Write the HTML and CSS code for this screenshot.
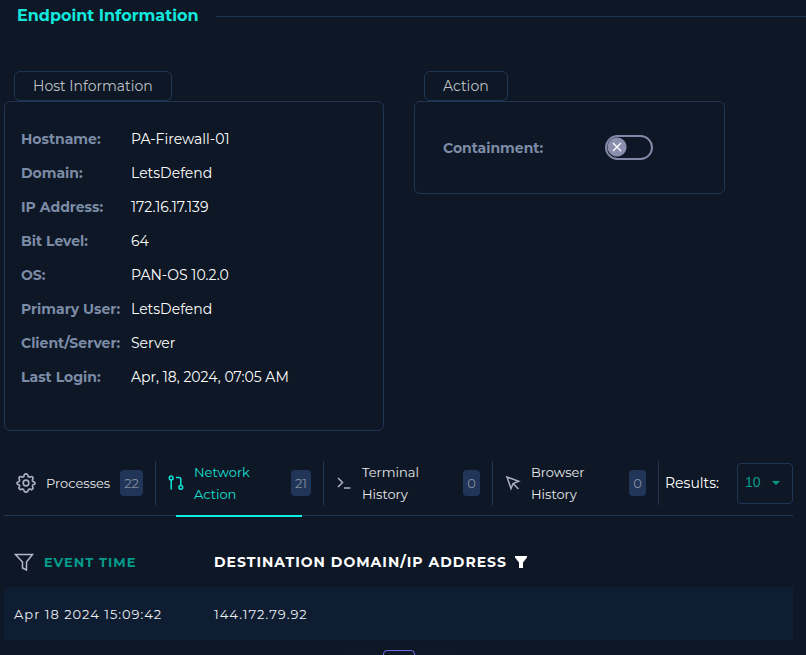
FILE: index.html
```html
<!DOCTYPE html>
<html lang="en">
<head>
<meta charset="utf-8">
<meta name="viewport" content="width=device-width, initial-scale=1">
<title>Endpoint Information</title>
<link rel="stylesheet" href="styles.css">
</head>
<body>
<main class="page">
  <header class="heading"><h1>Endpoint Information</h1></header>

  <div class="panels">
    <section class="group">
      <h2 class="legend">Host Information</h2>
      <dl class="panel host">
        <dt>Hostname:</dt><dd>PA-Firewall-01</dd>
        <dt>Domain:</dt><dd>LetsDefend</dd>
        <dt>IP Address:</dt><dd>172.16.17.139</dd>
        <dt>Bit Level:</dt><dd>64</dd>
        <dt>OS:</dt><dd>PAN-OS 10.2.0</dd>
        <dt>Primary User:</dt><dd>LetsDefend</dd>
        <dt>Client/Server:</dt><dd>Server</dd>
        <dt>Last Login:</dt><dd>Apr, 18, 2024, 07:05 AM</dd>
      </dl>
    </section>
    <section class="group">
      <h2 class="legend">Action</h2>
      <div class="panel action">
        <label for="containment">Containment:</label>
        <span class="switch">
          <input type="checkbox" role="switch" id="containment">
          <svg class="cross" viewBox="0 0 10 10" aria-hidden="true"><path d="M1 1l8 8M9 1l-8 8"/></svg>
        </span>
      </div>
    </section>
  </div>

  <nav class="tabs">
    <button class="tab" type="button">
      <svg class="icon gear" viewBox="0 0 24 24" aria-hidden="true"><circle cx="12" cy="12" r="3.4"/><path d="M10 2Q12 .2 14 2l.6 2.300q1 1 2.300.3l2-.4q1.300.6 1.600 1.900l-.7 2q-.4 1.300.5 2l2 .9q1 1.200 0 2.400l-2 .8q-1 .8-.4 2l.6 2.100q-.4 1.400-1.700 1.700l-2-.6q-1.300-.4-2 .6l-.8 2.200q-2 1.300-4 0l-.8-2.200q-.7-1-2-.6l-2 .6q-1.300-.3-1.700-1.700l.6-2.100q.6-1.200-.4-2l-2-.8q-1-1.200 0-2.400l2-.9q.9-.7.5-2l-.7-2q.3-1.300 1.600-1.900l2 .4q1.300.7 2.300-.3z"/></svg>
      <span class="name">Processes</span><span class="count">22</span>
    </button>
    <button class="tab active" type="button">
      <svg class="icon" viewBox="0 0 16 16" aria-hidden="true"><circle cx="3.200" cy="3" r="1.900"/><path d="M3.200 5v9.600M8 2.600h3q1.800 0 1.800 1.800v6"/><circle cx="12.800" cy="12.300" r="1.900"/></svg>
      <span class="name">Network Action</span><span class="count">21</span>
    </button>
    <button class="tab" type="button">
      <svg class="icon" viewBox="0 0 16 16" aria-hidden="true"><path d="M2 3l4.500 4.500L2 12M8 13h6.500"/></svg>
      <span class="name">Terminal History</span><span class="count">0</span>
    </button>
    <button class="tab" type="button">
      <svg class="icon" viewBox="0 0 16 16" aria-hidden="true"><path d="M2 2l4 11.500 2-5 5.700-2.200zM8 8.500l5.500 5.500"/></svg>
      <span class="name">Browser History</span><span class="count">0</span>
    </button>
    <div class="results">
      <label for="results">Results:</label>
      <span class="picker">
        <select id="results"><option>10</option><option>25</option><option>50</option></select>
        <svg class="arrow" viewBox="0 0 8 4" aria-hidden="true"><path d="M0 0h8L4 4z"/></svg>
      </span>
    </div>
  </nav>

  <table class="events">
    <thead>
      <tr>
        <th scope="col" class="time"><div class="cell"><svg class="outline-filter" viewBox="0 0 20 18" aria-hidden="true"><path d="M1.500 1.500h17L12.500 9v8l-4-2V9z"/></svg>EVENT TIME</div></th>
        <th scope="col"><div class="cell near">DESTINATION DOMAIN/IP ADDRESS<svg class="solid-filter" viewBox="0 0 12 12" aria-hidden="true"><path d="M0 0h12v1.500L8 6.500V12H4V6.500L0 1.500z"/></svg></div></th>
      </tr>
    </thead>
    <tbody><tr><td>Apr 18 2024 15:09:42</td><td>144.172.79.92</td></tr></tbody>
  </table>

  <div class="pager">
    <button type="button" aria-label="Previous page"></button>
    <button type="button" class="current" aria-label="Current page"></button>
    <button type="button" aria-label="Next page"></button>
  </div>
</main>
</body>
</html>
```
FILE: styles.css
```css
* { box-sizing: border-box; }

body {
  margin: 0;
  height: 100vh;
  overflow: hidden;
  background: #0d1725;
  color: #fff;
  font: 14px/22px Montserrat, Inter, sans-serif;
}

button, select { font: inherit; color: inherit; }

.page { padding-left: 4px; padding-right: 13px; }

.heading {
  display: flex;
  align-items: center;
  gap: 18px;
  height: 32px;
  margin-right: -13px;
  padding-left: 13px;
}
.heading::after { content: ""; flex: 1; height: 1px; background: #203556; }
.heading h1 {
  margin: 0;
  color: #12e8de;
  font-size: 16px;
  font-weight: 700;
  line-height: 24px;
}

.panels {
  display: grid;
  grid-template-columns: 380fr 311fr;
  align-items: start;
  gap: 30px;
  margin-top: 39px;
  margin-right: 68px;
}
.legend {
  width: fit-content;
  height: 30px;
  margin: 0 0 0 10px;
  padding: 0 18px;
  border: 1px solid #203556;
  border-radius: 6px;
  color: #bfc1c4;
  font-size: 14px;
  font-weight: 400;
  line-height: 28px;
}
.panel { margin: 0; border: 1px solid #203556; border-radius: 6px; }
.host {
  display: grid;
  grid-template-columns: 110px 1fr;
  grid-auto-rows: 34px;
  align-items: center;
  padding: 20px 16px 36px;
}
.host dt, .action label { color: #7c8ca7; font-weight: 700; }
.host dt { white-space: nowrap; }
.host dd { margin: 0; }

.action {
  display: flex;
  align-items: center;
  gap: 62px;
  height: 93px;
  padding: 0 28px;
}
.switch { position: relative; display: flex; }
.switch input {
  appearance: none;
  width: 48px;
  height: 25px;
  margin: 0;
  border: 2px solid #8587a8;
  border-radius: 13px;
  background: radial-gradient(circle at 10px 10px, #8c8eae 9px, transparent 10px);
}
.cross {
  position: absolute;
  left: 7px;
  top: 7px;
  width: 10px;
  height: 10px;
  stroke: #fff;
  stroke-width: 1.3;
  pointer-events: none;
}

.tabs {
  display: grid;
  grid-template-columns: 152fr 168fr 169fr 166fr 134fr;
  margin-top: 30px;
  padding-bottom: 10px;
  border-bottom: 1px solid #203556;
}
.tab {
  position: relative;
  display: flex;
  align-items: center;
  height: 44px;
  padding: 0 12px;
  border: 0;
  border-right: 1px solid #203556;
  background: none;
  color: #e6e7ea;
  font-size: 13px;
  text-align: left;
}
.tab .name { flex: 1; margin: 0 10px; }
.tab .count {
  min-width: 17px;
  padding: 2px 4px;
  border-radius: 4px;
  background: #213558;
  color: #848c9d;
  text-align: center;
}
.tab.active { color: #14e0d5; }
.tab.active::after {
  content: "";
  position: absolute;
  left: 20px;
  right: 21px;
  bottom: -12px;
  height: 2px;
  background: #0ff0e5;
}
.icon {
  flex: none;
  width: 16px;
  height: 16px;
  fill: none;
  stroke: #aaaec2;
  stroke-width: 1.5;
}
.gear { width: 20px; height: 20px; stroke-width: 2; stroke-linejoin: round; }
.active .icon { stroke: #10e4d9; }

.results {
  display: flex;
  align-items: center;
  justify-content: space-between;
  padding-left: 6px;
}
.picker { position: relative; display: flex; }
.picker select {
  appearance: none;
  width: 56px;
  height: 41px;
  padding: 0 7px 2px;
  border: 1px solid #203556;
  border-radius: 4px;
  background: transparent;
  color: #059b8b;
  font-family: "Liberation Sans", sans-serif;
}
.picker option { background: #0d1725; }
.arrow {
  position: absolute;
  right: 13px;
  top: 18px;
  width: 8px;
  height: 4px;
  fill: #059b8b;
  pointer-events: none;
}

.events {
  width: 100%;
  margin-top: 21px;
  border-collapse: collapse;
  table-layout: fixed;
  text-align: left;
  letter-spacing: 1px;
}
.events th, .events td { padding: 0 10px; }
.events th { height: 50px; font-weight: 700; }
.events .time { width: 200px; color: #059b8b; font-size: 13px; }
.events td { height: 53px; background: #0f1d33; color: #eceef1; font-size: 13px; }
.cell { display: flex; align-items: center; gap: 10px; white-space: nowrap; }
.near { gap: 8px; }
.outline-filter { width: 20px; height: 18px; fill: none; stroke: #b6b8cc; stroke-width: 1.5; }
.solid-filter { width: 12px; height: 12px; fill: #fff; }

.pager { display: flex; justify-content: center; gap: 6px; margin-top: 10px; }
.pager button {
  width: 32px;
  height: 32px;
  border: 1px solid #101b2a;
  border-radius: 4px;
  background: none;
}
.pager .current { border-color: #696ee5; }
```
